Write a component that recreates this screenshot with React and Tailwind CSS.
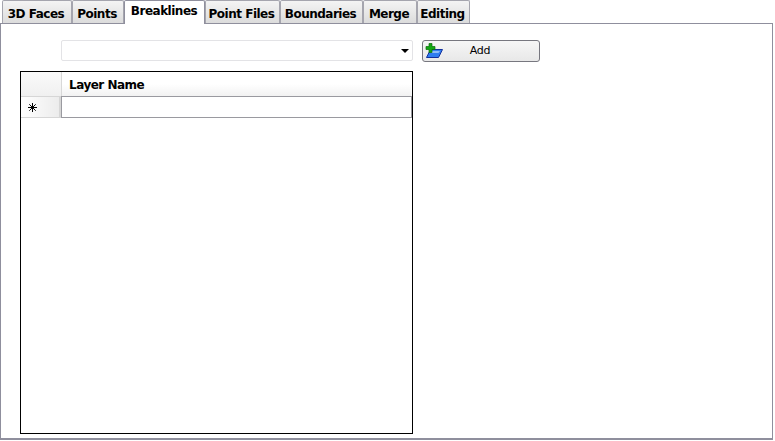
import React from 'react';

const tabs = [
  { label: '3D Faces', width: 'w-[70px]' },
  { label: 'Points', width: 'w-[52px]' },
  { label: 'Breaklines', width: 'w-[81px]', active: true },
  { label: 'Point Files', width: 'w-[75px]' },
  { label: 'Boundaries', width: 'w-[83px]' },
  { label: 'Merge', width: 'w-[54px]' },
  { label: 'Editing', width: 'w-[53px]' },
];

const font = "font-['DejaVu_Sans',sans-serif] text-[12px] font-bold tracking-[-0.5px] text-black";

const Tab = ({ label, width, active }) => {
  if (active) {
    return (
      <div className={`${width} ${font} relative z-10 -mb-px h-[24px] shrink-0 rounded-t-[2px] border border-b-0 border-[#8f8f9d] bg-white pr-[1px] text-center leading-[21px]`}>
        {label}
      </div>
    );
  }
  return (
    <div className={`${width} ${font} mt-[1px] h-[23px] shrink-0 rounded-t-[2px] border border-b-0 border-[#a5a5ae] bg-gradient-to-b from-[#f4f4f4] to-[#dcdcdc] pr-[2px] text-center leading-[27px]`}>
      {label}
    </div>
  );
};

const AddIcon = () => (
  <svg width="18" height="16" viewBox="0 0 18 16">
    <path d="M5.5 6.5H17.5L13.5 14.5H1.5Z" fill="#2f7df0" stroke="#12309c" />
    <path d="M6.5 8H15L13.5 10H5.5Z" fill="#8dbcf8" />
    <path d="M4 0.5h3v3h3v3H7v3H4v-3H1v-3h3Z" fill="#12a812" stroke="#0b6b0b" strokeWidth="0.7" />
  </svg>
);

const NewRowIcon = () => (
  <svg width="9" height="9" viewBox="0 0 9 9" stroke="#000" strokeWidth="1">
    <path d="M4.5 0V9M0 4.5H9M1.3 1.3L7.7 7.7M7.7 1.3L1.3 7.7" />
  </svg>
);

export default function App() {
  return (
    <div className="h-[441px] w-[775px] overflow-hidden bg-white">
      <div className="flex h-[23px] items-end pl-[2px] pr-[3px]">
        {tabs.map((tab) => (
          <Tab key={tab.label} {...tab} />
        ))}
      </div>

      <div className="h-[417px] w-[773px] border border-b-2 border-[#8f8f9d] bg-white pl-[19px] pt-[16px]">
        <div className="flex items-start">
          <div className="ml-[41px] flex h-[21px] w-[352px] items-center justify-end rounded-[2px] border border-[#e3e3e6] pr-[3px]">
            <div className="h-0 w-0 border-x-[4px] border-t-[4px] border-x-transparent border-t-black" />
          </div>
          <button
            type="button"
            className="ml-[9px] flex h-[22px] w-[118px] items-center rounded-[3px] border border-[#77777f] bg-gradient-to-b from-[#f6f6f6] to-[#e8e8e8] pl-[2px]"
          >
            <AddIcon />
            <span className="ml-[26px] flex-1 pr-[48px] text-center font-['DejaVu_Sans',sans-serif] text-[11px] tracking-[-0.2px] text-black">Add</span>
          </button>
        </div>

        <div className="mt-[9px] h-[363px] w-[393px] border border-black bg-white">
          <div className="flex h-[24px]">
            <div className="w-[40px] bg-gradient-to-b from-[#fafafa] to-[#f0f0f0]" />
            <div className={`${font} flex-1 border-l border-[#d8d8d8] bg-gradient-to-b from-white via-white to-[#f2f2f2] pl-[7px] leading-[26px]`}>
              Layer Name
            </div>
          </div>
          <div className="flex h-[22px]">
            <div className="flex w-[40px] items-center border-y border-r-2 border-[#d6d6d6] bg-gradient-to-r from-white to-[#ececec] pl-[7px]">
              <NewRowIcon />
            </div>
            <div className="flex-1 border border-[#9a9aa0] bg-white" />
          </div>
        </div>
      </div>
    </div>
  );
}
